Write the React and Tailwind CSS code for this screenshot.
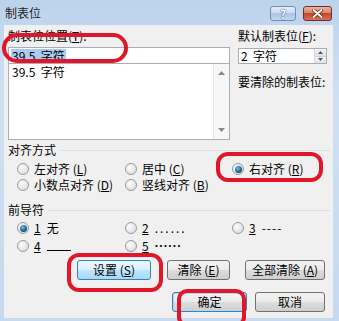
import React from "react";

function U({ children }) {
  return <span className="underline underline-offset-1">{children}</span>;
}

function Radio({ checked, children, className = "" }) {
  return (
    <div className={`flex items-center h-[16px] ${className}`}>
      <span className="w-[12px] h-[12px] shrink-0 rounded-full border border-[#9a9a9a] bg-[radial-gradient(circle_at_35%_35%,#fdfdfd,#d6d6d6)] flex items-center justify-center">
        {checked && (
          <span className="w-[7px] h-[7px] rounded-full bg-[radial-gradient(circle_at_40%_35%,#7fc0ea,#1b5f94_55%,#0b3a63)]" />
        )}
      </span>
      <span className="ml-[5px] whitespace-nowrap flex items-center">{children}</span>
    </div>
  );
}

function Btn({ children, className = "", primary, focus }) {
  const skin = primary
    ? "border-[#3c7fb1] bg-[linear-gradient(#eaf6fd_0%,#d9f0fc_49%,#bee6fd_50%,#a7d9f5_100%)]"
    : focus
    ? "border-[#3c7fb1] bg-[linear-gradient(#f2f2f2_0%,#ebebeb_49%,#dddddd_50%,#cfcfcf_100%)] shadow-[inset_0_0_0_1px_#a6dcf7]"
    : "border-[#707070] bg-[linear-gradient(#f2f2f2_0%,#ebebeb_49%,#dddddd_50%,#cfcfcf_100%)]";
  return (
    <div className={`h-[20px] flex items-center justify-center rounded-[3px] border ${skin} ${className}`}>
      <span className="whitespace-nowrap">{children}</span>
    </div>
  );
}

function GroupHeader({ label }) {
  return (
    <div className="flex items-center h-[14px] pl-[4px] pr-[3px]">
      <span className="whitespace-nowrap">{label}</span>
      <span className="flex-1 h-px ml-[4px] bg-[#d5dfe5]" />
    </div>
  );
}

function Arrow({ up }) {
  return (
    <svg width="7" height="4" viewBox="0 0 7 4">
      <path d={up ? "M0 4 L3.5 0 L7 4 Z" : "M0 0 L3.5 4 L7 0 Z"} fill="#8a8a8a" />
    </svg>
  );
}

export default function App() {
  return (
    <div className="relative w-[339px] h-[321px] overflow-hidden bg-[linear-gradient(#bcd3ec,#cfe0f3_30%,#c6d9ee)] font-['Noto_Sans_CJK_SC',sans-serif] text-[12px] leading-[14px] text-black">
      {/* Title bar */}
      <div className="h-[25px] flex items-start">
        <div className="pl-[5px] pt-[6px] text-[#1e1e1e]">制表位</div>
        <div className="ml-auto mt-[6px] mr-[7px] flex gap-[7px]">
          <div className="w-[26px] h-[15px] rounded-[3px] border border-[#6f8db5] bg-[linear-gradient(#e4eefa_0%,#c8daf0_49%,#aac4e4_50%,#c4d8f0_100%)] flex items-center justify-center">
            <span className="text-[12px] leading-[12px] font-bold text-white [text-shadow:0_0_1px_#2c4a70,0_0_1px_#2c4a70]">?</span>
          </div>
          <div className="w-[29px] h-[15px] rounded-[3px] border border-[#7b2a1f] bg-[linear-gradient(#eab4a6_0%,#d97f68_49%,#c8462c_50%,#d4745a_100%)] flex items-center justify-center">
            <svg width="11" height="9" viewBox="0 0 11 9">
              <path d="M1.5 1 L9.5 8 M9.5 1 L1.5 8" stroke="#5a1a10" strokeWidth="3.2" strokeLinecap="round" />
              <path d="M1.5 1 L9.5 8 M9.5 1 L1.5 8" stroke="#fff" strokeWidth="2" strokeLinecap="round" />
            </svg>
          </div>
        </div>
      </div>

      {/* Body */}
      <div className="ml-[4px] mr-[6px] h-[293px] bg-[#f0f0f0] flex flex-col">
        {/* Top section */}
        <div className="flex gap-[8px] pt-[4px] pl-[4px]">
          <div className="w-[222px] flex flex-col">
            <div className="h-[14px]">制表位位置(<U>T</U>):</div>
            <div className="mt-[4px] h-[17px] border border-[#abadb3] bg-white px-[2px] flex items-center">
              <span className="bg-[#a9cdf0] px-px leading-[13px]">39.5&nbsp;&nbsp;字符</span>
            </div>
            <div className="h-[76px] border border-t-0 border-[#abadb3] bg-white flex">
              <div className="flex-1 pl-[3px] pt-px">39.5&nbsp;&nbsp;字符</div>
              <div className="w-[16px] border-l border-[#e6e6e6] bg-[#f7f7f7] flex flex-col items-center justify-between pt-[7px] pb-[7px]">
                <Arrow up />
                <Arrow />
              </div>
            </div>
          </div>
          <div className="w-[89px] flex flex-col">
            <div className="h-[14px] whitespace-nowrap">默认制表位(<U>F</U>):</div>
            <div className="mt-[5px] h-[16px] border border-[#abadb3] bg-white flex">
              <div className="flex-1 pl-[2px] leading-[14px]">2&nbsp;&nbsp;字符</div>
              <div className="w-[12px] flex flex-col border-l border-[#dcdcdc]">
                <div className="flex-1 flex items-center justify-center bg-[linear-gradient(#f4f4f4,#dfe3e8)] border-b border-[#c9ccd2]">
                  <svg width="5" height="3" viewBox="0 0 5 3"><path d="M0 3 L2.5 0 L5 3 Z" fill="#4d5a6a" /></svg>
                </div>
                <div className="flex-1 flex items-center justify-center bg-[linear-gradient(#f4f4f4,#dfe3e8)]">
                  <svg width="5" height="3" viewBox="0 0 5 3"><path d="M0 0 L2.5 3 L5 0 Z" fill="#4d5a6a" /></svg>
                </div>
              </div>
            </div>
            <div className="mt-[11px] h-[14px] whitespace-nowrap">要清除的制表位:</div>
          </div>
        </div>

        {/* Alignment */}
        <div className="mt-[3px]">
          <GroupHeader label="对齐方式" />
        </div>
        <div className="mt-[4px] pl-[13px] flex">
          <Radio className="w-[108px]">左对齐 (<U>L</U>)</Radio>
          <Radio className="w-[107px]">居中 (<U>C</U>)</Radio>
          <Radio checked>右对齐 (<U>R</U>)</Radio>
        </div>
        <div className="pl-[13px] flex">
          <Radio className="w-[108px]">小数点对齐 (<U>D</U>)</Radio>
          <Radio className="w-[107px]">竖线对齐 (<U>B</U>)</Radio>
        </div>

        {/* Leader */}
        <div className="mt-[10px]">
          <GroupHeader label="前导符" />
        </div>
        <div className="mt-[3px] pl-[13px] flex">
          <Radio checked className="w-[108px]"><U>1</U><span className="ml-[6px]">无</span></Radio>
          <Radio className="w-[107px]"><U>2</U><span className="ml-[6px] tracking-[2px]">......</span></Radio>
          <Radio><U>3</U><span className="ml-[6px] tracking-[1px]">----</span></Radio>
        </div>
        <div className="mt-[2px] pl-[13px] flex">
          <Radio className="w-[108px]"><U>4</U><span className="ml-[6px] inline-block w-[24px] h-[10px] border-b border-black" /></Radio>
          <Radio className="w-[107px]"><U>5</U><span className="ml-[6px] font-['Liberation_Sans',sans-serif] font-bold tracking-[0.5px]">······</span></Radio>
        </div>

        {/* Buttons */}
        <div className="mt-[6px] flex justify-end pr-[8px]">
          <Btn primary className="w-[74px]">设置 (<U>S</U>)</Btn>
          <Btn className="w-[63px] ml-[16px]">清除 (<U>E</U>)</Btn>
          <Btn className="w-[80px] ml-[15px]">全部清除 (<U>A</U>)</Btn>
        </div>
        <div className="mt-[12px] flex justify-end pr-[8px]">
          <Btn focus className="w-[75px]">确定</Btn>
          <Btn className="w-[70px] ml-[8px]">取消</Btn>
        </div>
      </div>

      {/* Red annotations */}
      <div className="absolute left-[2px] top-[33px] w-[126px] h-[30px] rounded-[15px] border-[4px] border-[#e2162b]" />
      <div className="absolute left-[216px] top-[152px] w-[107px] h-[30px] rounded-[12px] border-[4px] border-[#e2162b]" />
      <div className="absolute left-[67px] top-[253px] w-[96px] h-[39px] rounded-[12px] border-[4px] border-[#e2162b]" />
      <div className="absolute left-[177px] top-[289px] w-[69px] h-[38px] rounded-[10px] border-[4px] border-[#e2162b]" />
    </div>
  );
}
